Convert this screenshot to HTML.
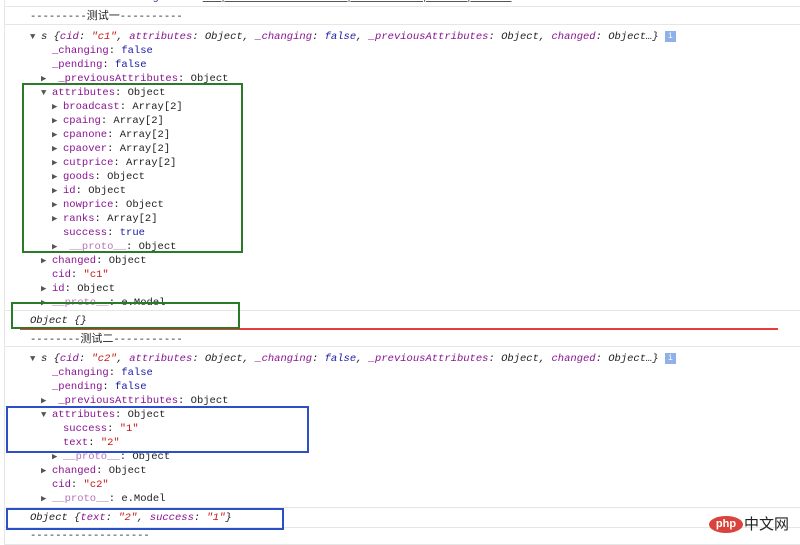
<!DOCTYPE html>
<html><head><meta charset="utf-8"><style>
body{margin:0;width:800px;height:545px;background:#fff;overflow:hidden;position:relative;font-family:"Liberation Mono",monospace;font-size:10.5px;color:#222}
.l{position:absolute;white-space:pre;line-height:14px;height:14px;margin-top:2px}
.k{color:#881391}.s{color:#c41a16}.b{color:#1a1aa6}.i{font-style:italic}
.a{display:inline-block;width:11px;color:#555;font-style:normal;font-size:9px}
.sep{position:absolute;left:4px;right:0;height:1px;background:#e6e6e6}
.box{position:absolute;border:2px solid}
.cn{font-family:"Liberation Sans","Noto Sans CJK SC",sans-serif;font-size:11px}
.ic{display:inline-block;width:11px;height:11px;background:#8fb0e8;color:#fff;font-size:8px;text-align:center;line-height:11px;vertical-align:middle;font-style:normal}
</style></head><body>
<div style="position:absolute;left:4px;top:0;bottom:0;width:1px;background:#e6e6e6"></div>
<div class="l" style="left:20px;top:-11px;color:#1a1aa6">› XHR finished loading: GET "<u style="color:#555">http://localhost/nas-wap/module/cutprice/tpl.html</u>".</div>
<div class="sep" style="top:6px"></div>
<div class="l" style="left:30px;top:7px">---------<span class="cn">测试一</span>----------</div>
<div class="sep" style="top:24px"></div>
<div class="l i" style="left:30px;top:28px"><span class="a">▼</span>s {<span class="k">cid</span>: <span class="s">"c1"</span>, <span class="k">attributes</span>: Object, <span class="k">_changing</span>: <span class="b">false</span>, <span class="k">_previousAttributes</span>: Object, <span class="k">changed</span>: Object…} <span class="ic">i</span></div>
<div class="l" style="left:52px;top:42px"><span class="k">_changing</span>: <span class="b">false</span></div>
<div class="l" style="left:52px;top:56px"><span class="k">_pending</span>: <span class="b">false</span></div>
<div class="l" style="left:41px;top:70px"><span class="a">▶</span> <span class="k">_previousAttributes</span>: Object</div>
<div class="l" style="left:41px;top:84px"><span class="a">▼</span><span class="k">attributes</span>: Object</div>
<div class="l" style="left:52px;top:98px"><span class="a">▶</span><span class="k">broadcast</span>: Array[2]</div>
<div class="l" style="left:52px;top:112px"><span class="a">▶</span><span class="k">cpaing</span>: Array[2]</div>
<div class="l" style="left:52px;top:126px"><span class="a">▶</span><span class="k">cpanone</span>: Array[2]</div>
<div class="l" style="left:52px;top:140px"><span class="a">▶</span><span class="k">cpaover</span>: Array[2]</div>
<div class="l" style="left:52px;top:154px"><span class="a">▶</span><span class="k">cutprice</span>: Array[2]</div>
<div class="l" style="left:52px;top:168px"><span class="a">▶</span><span class="k">goods</span>: Object</div>
<div class="l" style="left:52px;top:182px"><span class="a">▶</span><span class="k">id</span>: Object</div>
<div class="l" style="left:52px;top:196px"><span class="a">▶</span><span class="k">nowprice</span>: Object</div>
<div class="l" style="left:52px;top:210px"><span class="a">▶</span><span class="k">ranks</span>: Array[2]</div>
<div class="l" style="left:63px;top:224px"><span class="k">success</span>: <span class="b">true</span></div>
<div class="l" style="left:52px;top:238px"><span class="a">▶</span> <span class="k" style="opacity:.6">__proto__</span>: Object</div>
<div class="l" style="left:41px;top:252px"><span class="a">▶</span><span class="k">changed</span>: Object</div>
<div class="l" style="left:52px;top:266px"><span class="k">cid</span>: <span class="s">"c1"</span></div>
<div class="l" style="left:41px;top:280px"><span class="a">▶</span><span class="k">id</span>: Object</div>
<div class="l" style="left:41px;top:294px"><span class="a">▶</span><span class="k" style="opacity:.6">__proto__</span>: e.Model</div>
<div class="sep" style="top:310px"></div>
<div class="l i" style="left:30px;top:312px">Object {}</div>
<div style="position:absolute;left:20px;top:328px;width:758px;height:2px;background:#e83c3c"></div>
<div class="l" style="left:30px;top:330px">--------<span class="cn">测试二</span>-----------</div>
<div class="sep" style="top:346px"></div>
<div class="l i" style="left:30px;top:350px"><span class="a">▼</span>s {<span class="k">cid</span>: <span class="s">"c2"</span>, <span class="k">attributes</span>: Object, <span class="k">_changing</span>: <span class="b">false</span>, <span class="k">_previousAttributes</span>: Object, <span class="k">changed</span>: Object…} <span class="ic">i</span></div>
<div class="l" style="left:52px;top:364px"><span class="k">_changing</span>: <span class="b">false</span></div>
<div class="l" style="left:52px;top:378px"><span class="k">_pending</span>: <span class="b">false</span></div>
<div class="l" style="left:41px;top:392px"><span class="a">▶</span> <span class="k">_previousAttributes</span>: Object</div>
<div class="l" style="left:41px;top:406px"><span class="a">▼</span><span class="k">attributes</span>: Object</div>
<div class="l" style="left:63px;top:420px"><span class="k">success</span>: <span class="s">"1"</span></div>
<div class="l" style="left:63px;top:434px"><span class="k">text</span>: <span class="s">"2"</span></div>
<div class="l" style="left:52px;top:448px"><span class="a">▶</span><span class="k" style="opacity:.6">__proto__</span>: Object</div>
<div class="l" style="left:41px;top:462px"><span class="a">▶</span><span class="k">changed</span>: Object</div>
<div class="l" style="left:52px;top:476px"><span class="k">cid</span>: <span class="s">"c2"</span></div>
<div class="l" style="left:41px;top:490px"><span class="a">▶</span><span class="k" style="opacity:.6">__proto__</span>: e.Model</div>
<div class="sep" style="top:507px"></div>
<div class="l i" style="left:30px;top:509px">Object {<span class="k">text</span>: <span class="s">"2"</span>, <span class="k">success</span>: <span class="s">"1"</span>}</div>
<div class="sep" style="top:527px"></div>
<div class="l" style="left:30px;top:527px">-------------------</div>
<div class="sep" style="top:544px"></div>
<div class="box" style="left:22px;top:83px;width:217px;height:166px;border-color:#2a7a2a"></div>
<div class="box" style="left:11px;top:302px;width:225px;height:23px;border-color:#2a7a2a"></div>
<div class="box" style="left:6px;top:406px;width:299px;height:43px;border-color:#2a4fc8"></div>
<div class="box" style="left:6px;top:508px;width:274px;height:18px;border-color:#2a4fc8"></div>
<div style="position:absolute;left:709px;top:516px;width:34px;height:17px;border-radius:50%;background:#d9433b;color:#fff;font:bold 11px 'Liberation Sans',sans-serif;text-align:center;line-height:16px">php</div>
<div style="position:absolute;left:744px;top:513px;color:#222;font:15px 'Noto Sans CJK SC',sans-serif;line-height:22px">中文网</div>
</body></html>
